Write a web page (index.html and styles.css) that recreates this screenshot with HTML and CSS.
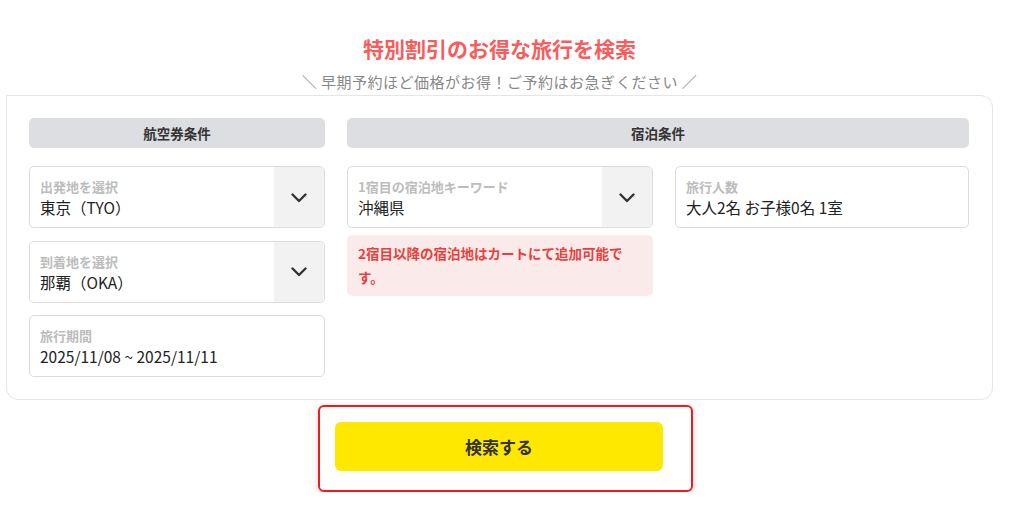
FILE: index.html
```html
<!DOCTYPE html>
<html lang="ja">
<head>
<meta charset="utf-8">
<title>特別割引のお得な旅行を検索</title>
<link rel="stylesheet" href="styles.css">
</head>
<body>
<div class="page">
  <h1 class="title">特別割引のお得な旅行を検索</h1>
  <p class="subtitle">＼ 早期予約ほど価格がお得！ご予約はお急ぎください ／</p>
  <div class="panel">
    <div class="col col-air">
      <div class="col-head">航空券条件</div>
      <div class="field">
        <div class="field-body">
          <div class="label">出発地を選択</div>
          <div class="value">東京（TYO）</div>
        </div>
        <div class="drop"><svg width="16" height="10" viewBox="0 0 16 10"><polyline points="1.5,1.5 8,8 14.5,1.5" fill="none" stroke="#333" stroke-width="2.4" stroke-linecap="round" stroke-linejoin="round"/></svg></div>
      </div>
      <div class="field">
        <div class="field-body">
          <div class="label">到着地を選択</div>
          <div class="value">那覇（OKA）</div>
        </div>
        <div class="drop"><svg width="16" height="10" viewBox="0 0 16 10"><polyline points="1.5,1.5 8,8 14.5,1.5" fill="none" stroke="#333" stroke-width="2.4" stroke-linecap="round" stroke-linejoin="round"/></svg></div>
      </div>
      <div class="field">
        <div class="field-body">
          <div class="label">旅行期間</div>
          <div class="value">2025/11/08 ~ 2025/11/11</div>
        </div>
      </div>
    </div>
    <div class="col col-stay">
      <div class="col-head">宿泊条件</div>
      <div class="stay-grid">
        <div class="stay-left">
          <div class="field">
            <div class="field-body">
              <div class="label">1宿目の宿泊地キーワード</div>
              <div class="value">沖縄県</div>
            </div>
            <div class="drop"><svg width="16" height="10" viewBox="0 0 16 10"><polyline points="1.5,1.5 8,8 14.5,1.5" fill="none" stroke="#333" stroke-width="2.4" stroke-linecap="round" stroke-linejoin="round"/></svg></div>
          </div>
          <div class="notice">2宿目以降の宿泊地はカートにて追加可能です。</div>
        </div>
        <div class="stay-right">
          <div class="field">
            <div class="field-body">
              <div class="label">旅行人数</div>
              <div class="value">大人2名 お子様0名 1室</div>
            </div>
          </div>
        </div>
      </div>
    </div>
  </div>
  <div class="btn-wrap">
    <button class="search-btn" type="button">検索する</button>
  </div>
</div>
</body>
</html>
```
FILE: styles.css
```css
* { box-sizing: border-box; }
html, body { margin: 0; padding: 0; background: #fff; }
body {
  font-family: "Noto Sans CJK JP", "Noto Sans", sans-serif;
  color: #222;
}
.page {
  width: 987px;
  margin-left: 6px;
}
.title {
  margin: 0;
  padding-top: 33px;
  font-size: 21px;
  line-height: 30px;
  font-weight: 700;
  color: #fa5b5b;
  text-align: center;
}
.subtitle {
  margin: 8px 0 2px;
  font-size: 15px;
  line-height: 22px;
  letter-spacing: 0.5px;
  color: #888;
  text-align: center;
}
.panel {
  border: 1px solid #e6e6e6;
  border-radius: 0 12px 12px 12px;
  padding: 22px 22px 22px;
  display: grid;
  grid-template-columns: 296px 622px;
  column-gap: 22px;
  align-items: start;
}
.col {
  display: flex;
  flex-direction: column;
  gap: 12.5px;
}
.col-head {
  height: 30px;
  background: #dddee1;
  border-radius: 5px;
  font-size: 13.5px;
  font-weight: 700;
  color: #333;
  display: flex;
  align-items: center;
  justify-content: center;
  margin-bottom: 5.5px;
}
.field {
  height: 62px;
  border: 1px solid #dcdcdc;
  border-radius: 5px;
  display: flex;
  overflow: hidden;
  background: #fff;
}
.field-body {
  flex: 1;
  padding: 0 10px;
  display: flex;
  flex-direction: column;
  justify-content: center;
  padding-top: 1px;
}
.label {
  font-size: 13px;
  line-height: 19px;
  font-weight: 700;
  color: #bcbcbc;
}
.value {
  font-size: 15.5px;
  line-height: 22px;
  color: #222;
}
.drop {
  width: 50px;
  background: #f2f2f2;
  display: flex;
  align-items: center;
  justify-content: center;
  padding-top: 1px;
}
.stay-grid {
  display: grid;
  grid-template-columns: 306px 294px;
  column-gap: 22px;
  align-items: start;
}
.stay-left {
  display: flex;
  flex-direction: column;
  gap: 7px;
}
.notice {
  background: #fbeaea;
  border-radius: 5px;
  padding: 6px 22px 7px 11px;
  font-size: 13.5px;
  line-height: 24px;
  font-weight: 700;
  color: #e8403c;
}
.btn-wrap {
  margin: 5px 0 0 312px;
  width: 375px;
  height: 87px;
  border: 2px solid #f21a1a;
  border-radius: 6px;
  padding: 15px 28px 19px 15px;
  box-shadow: 0 2px 6px rgba(0,0,0,0.18);
}
.search-btn {
  display: block;
  width: 328px;
  height: 49px;
  border: none;
  border-radius: 6px;
  background: #ffe800;
  font-family: "Noto Sans CJK JP", "Noto Sans", sans-serif;
  font-size: 17px;
  font-weight: 700;
  color: #333;
  cursor: pointer;
}
```
